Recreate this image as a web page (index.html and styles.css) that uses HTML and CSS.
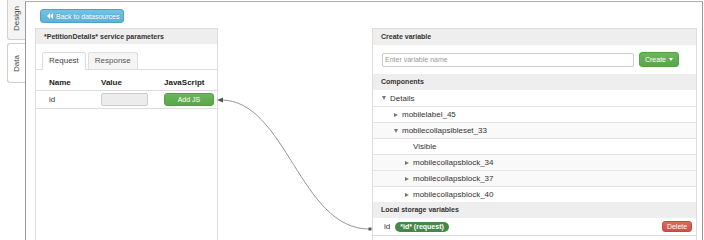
FILE: index.html
```html
<!DOCTYPE html>
<html>
<head>
<meta charset="utf-8">
<link rel="stylesheet" href="styles.css">
</head>
<body>
<div class="app">
  <div class="sidebar">
    <div class="vtab vtab-design"><span>Design</span></div>
    <div class="vtab vtab-data active"><span>Data</span></div>
  </div>
  <div class="main">
    <div class="toolbar">
      <button class="btn-back"><span class="ico-back"><i></i><i></i></span>Back to datasources</button>
    </div>
    <div class="panels">
      <div class="panel panel-left">
        <div class="panel-head">*PetitionDetails* service parameters</div>
        <div class="tabs">
          <div class="tab active">Request</div>
          <div class="tab">Response</div>
        </div>
        <div class="params">
          <div class="prow phead">
            <div class="c1">Name</div>
            <div class="c2">Value</div>
            <div class="c3">JavaScript</div>
          </div>
          <div class="prow">
            <div class="c1">id</div>
            <div class="c2"><span class="val-input"></span></div>
            <div class="c3"><button class="btn-green btn-addjs">Add JS</button></div>
          </div>
        </div>
      </div>
      <div class="panel panel-right">
        <div class="panel-head">Create variable</div>
        <div class="create-row">
          <span class="var-input">Enter variable name</span>
          <button class="btn-green btn-create">Create <span class="caret"></span></button>
        </div>
        <div class="panel-head sub">Components</div>
        <div class="tree">
          <div class="trow l0"><span class="tri down"></span>Details</div>
          <div class="trow l1"><span class="tri right"></span>mobilelabel_45</div>
          <div class="trow l1 alt"><span class="tri down"></span>mobilecollapsibleset_33</div>
          <div class="trow l2"><span class="notri"></span>Visible</div>
          <div class="trow l2b alt"><span class="tri right"></span>mobilecollapsblock_34</div>
          <div class="trow l2b alt"><span class="tri right"></span>mobilecollapsblock_37</div>
          <div class="trow l2b"><span class="tri right"></span>mobilecollapsblock_40</div>
        </div>
        <div class="panel-head sub">Local storage variables</div>
        <div class="ls-row">
          <span class="ls-name">id</span>
          <span class="pill">*id* (request)</span>
          <span class="spacer"></span>
          <button class="btn-red">Delete</button>
        </div>
      </div>
    </div>
  </div>
  <svg class="links" width="704" height="240" viewBox="0 0 704 240">
    <path d="M221,100 C286,100 300,229 369,229" fill="none" stroke="#8a8a8a" stroke-width="0.9"/>
    <polygon points="217,100 223,97.6 223,102.4" fill="#555"/>
    <rect x="368.5" y="227.5" width="3" height="3" fill="#555"/>
  </svg>
</div>
</body>
</html>
```

FILE: styles.css
```css
* { box-sizing: border-box; }
html, body { margin: 0; padding: 0; }
body {
  width: 704px;
  height: 240px;
  overflow: hidden;
  background: #fff;
  font-family: "Liberation Sans", Arial, sans-serif;
  font-size: 8px;
  color: #333;
}
.app {
  position: relative;
  display: flex;
  width: 704px;
  height: 240px;
}
.sidebar {
  width: 25px;
  flex: none;
  padding-left: 7px;
  margin-top: -4px;
  display: flex;
  flex-direction: column;
  gap: 3px;
}
.vtab {
  width: 18px;
  border: 1px solid #cfcfcf;
  border-right: none;
  border-radius: 3px 0 0 3px;
  background: #f4f4f4;
  display: flex;
  align-items: center;
  justify-content: center;
}
.vtab span {
  transform: rotate(-90deg);
  white-space: nowrap;
  font-size: 8px;
  color: #444;
}
.vtab-design { height: 44px; }
.vtab-data { height: 40px; background: #fff; }
.main {
  flex: 1;
  margin-top: 1px;
  border-top: 1px solid #b0b0b0;
  border-left: 1px solid #999;
  border-right: 1px solid #999;
  margin-right: 1px;
  padding: 7px 5px 0 9px;
  display: flex;
  flex-direction: column;
}
.toolbar { padding-left: 5px; height: 14px; }
.btn-back {
  height: 14px;
  width: 84px;
  padding: 0 0 0 6px;
  border: 1px solid #4f9fc6;
  border-radius: 3px;
  background: linear-gradient(#74c2e2, #5fb1d8);
  color: #fff;
  font-family: "Liberation Sans", Arial, sans-serif;
  font-size: 7px;
  display: flex;
  align-items: center;
  gap: 3px;
  text-shadow: 0 -1px 0 rgba(0,0,0,0.15);
}
.ico-back { display: inline-flex; }
.ico-back i {
  display: block;
  width: 0; height: 0;
  border-top: 3px solid transparent;
  border-bottom: 3px solid transparent;
  border-right: 3px solid #fff;
}
.panels {
  margin-top: 5px;
  flex: 1;
  display: flex;
  justify-content: space-between;
}
.panel {
  border: 1px solid #ddd;
  border-bottom: none;
  background: #fff;
}
.panel-left { width: 183px; }
.panel-right { width: 325px; }
.panel-head {
  height: 15px;
  line-height: 15px;
  background: #eee;
  font-size: 7px;
  font-weight: bold;
  color: #333;
  padding-left: 8px;
}
.panel-right .panel-head { height: 16px; line-height: 16px; }
.tabs {
  display: flex;
  gap: 2px;
  padding: 8px 0 0 6px;
  border-bottom: 1px solid #ddd;
}
.tab {
  height: 17px;
  line-height: 16px;
  padding: 0 6px;
  border: 1px solid #ddd;
  border-bottom: none;
  border-radius: 3px 3px 0 0;
  background: #f5f5f5;
  color: #555;
  font-size: 8px;
}
.tab.active { background: #fff; margin-bottom: -1px; height: 18px; color: #444; }
.params { padding: 0; }
.prow {
  display: grid;
  grid-template-columns: 65px 63px 1fr;
  align-items: center;
  height: 18px;
  border-bottom: 1px solid #ddd;
}
.prow .c1 { padding-left: 13px; }
.phead {
  height: 21px;
  align-items: end;
  padding-bottom: 3px;
  font-weight: bold;
  color: #222;
}
.val-input {
  display: block;
  width: 47px;
  height: 13px;
  border: 1px solid #ccc;
  border-radius: 2px;
  background: #ececec;
}
.btn-green {
  border: 1px solid #55a045;
  border-radius: 3px;
  background: linear-gradient(#6cb55c, #5aa64b);
  color: #fff;
  font-family: "Liberation Sans", Arial, sans-serif;
  font-size: 7px;
  padding: 0;
}
.btn-addjs { width: 50px; height: 13px; display: block; }
.create-row {
  height: 29px;
  display: flex;
  align-items: center;
  padding: 0 17px 0 9px;
  gap: 5px;
}
.var-input {
  width: 252px;
  height: 14px;
  border: 1px solid #ccc;
  border-radius: 2px;
  line-height: 12px;
  padding-left: 2px;
  font-size: 7px;
  color: #999;
}
.btn-create {
  width: 40px;
  height: 15px;
  display: flex;
  align-items: center;
  justify-content: center;
  gap: 3px;
}
.caret {
  width: 0; height: 0;
  border-left: 2.5px solid transparent;
  border-right: 2.5px solid transparent;
  border-top: 3px solid #fff;
}
.panel-head.sub { color: #333; }
.tree { }
.trow {
  height: 16px;
  display: flex;
  align-items: center;
  border-top: 1px solid #e4e4e4;
  color: #333;
  font-size: 8px;
}
.trow:first-child { border-top: none; }
.trow.alt { background: #f9f9f9; }
.tri {
  width: 0; height: 0;
  margin-right: 4px;
}
.tri.down {
  border-left: 2.5px solid transparent;
  border-right: 2.5px solid transparent;
  border-top: 4px solid #777;
}
.tri.right {
  border-top: 2.5px solid transparent;
  border-bottom: 2.5px solid transparent;
  border-left: 4px solid #777;
  margin-right: 4px;
}
.notri { width: 0; }
.l0 { padding-left: 9px; }
.l1 { padding-left: 21px; }
.l2 { padding-left: 40px; }
.l2b { padding-left: 32px; }
.ls-row {
  height: 18px;
  display: flex;
  align-items: center;
  padding: 0 4px 0 11px;
  border-bottom: 1px solid #ddd;
}
.ls-name { font-size: 8px; margin-right: 5px; }
.pill {
  height: 10px;
  line-height: 10px;
  padding: 0 5px;
  border-radius: 5px;
  background: #468847;
  color: #fff;
  font-weight: bold;
  font-size: 7px;
}
.spacer { flex: 1; }
.btn-red {
  width: 30px;
  height: 11px;
  border: 1px solid #c9493f;
  border-radius: 3px;
  background: linear-gradient(#dc6a60, #cf5248);
  color: #fff;
  font-family: "Liberation Sans", Arial, sans-serif;
  font-size: 7px;
  padding: 0;
}
.links {
  position: absolute;
  left: 0;
  top: 0;
  pointer-events: none;
}
```
